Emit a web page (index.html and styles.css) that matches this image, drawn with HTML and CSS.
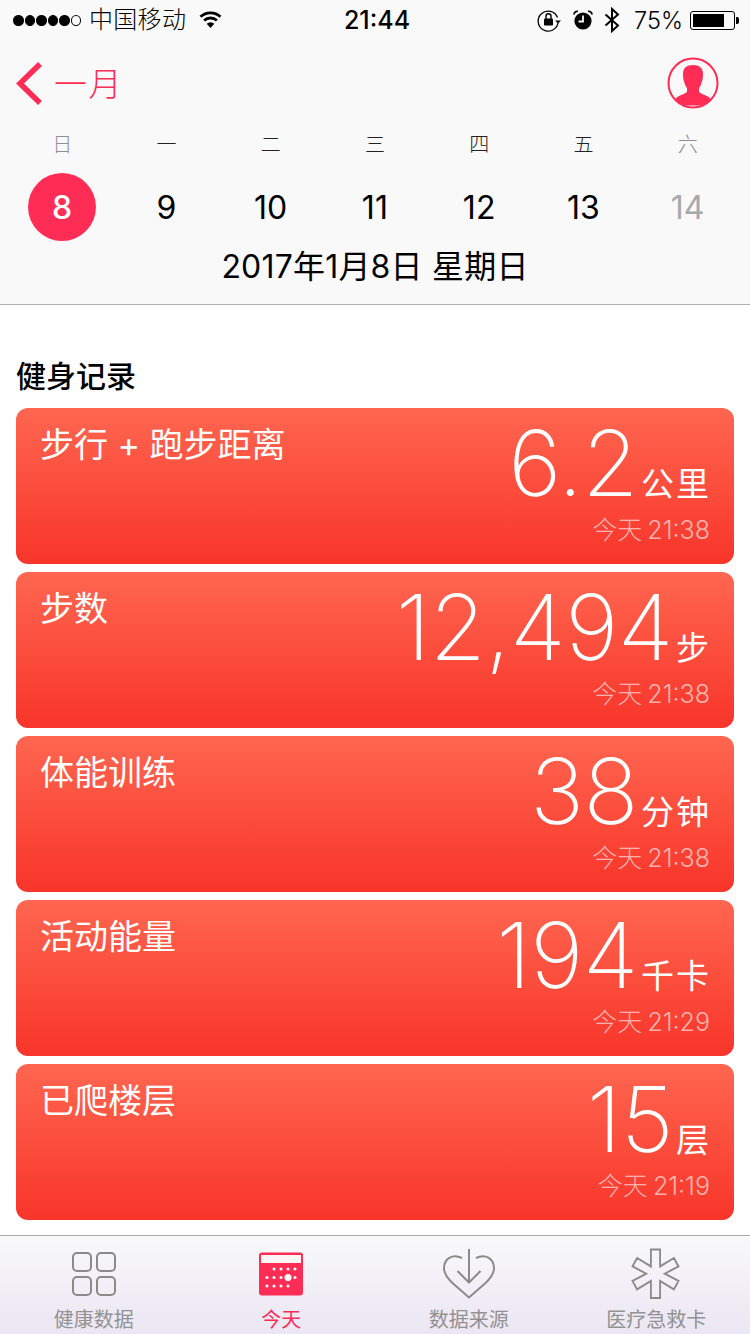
FILE: index.html
```html
<!DOCTYPE html>
<html lang="zh-CN">
<head>
<meta charset="utf-8">
<title>健康</title>
<link rel="stylesheet" href="styles.css">
</head>
<body>
<div class="app">
  <header class="top">
    <div class="status">
      <div class="status-left">
        <div class="signal"><i></i><i></i><i></i><i></i><i></i><i class="off"></i></div>
        <span class="carrier">中国移动</span>
        <svg class="wifi" width="25" height="18" viewBox="0 0 24 18"><path d="M12 17 8.200 12.800a5.400 5.400 0 0 1 7.600 0Z" fill="#000"/><path d="M5.600 9.600a9.200 9.200 0 0 1 12.800 0M2 5.800a14.500 14.500 0 0 1 20 0" fill="none" stroke="#000" stroke-width="2.800"/></svg>
      </div>
      <div class="clock">21:44</div>
      <div class="status-right">
        <svg class="lock" width="24" height="24" viewBox="0 0 24 24"><path d="M20.500 9.500A10 10 0 1 0 21 15" fill="none" stroke="#000" stroke-width="1.300"/><path d="M18 12.500h6l-3 3Z" fill="#000"/><rect x="7" y="10.500" width="9" height="7" rx="1" fill="#000"/><path d="M9 11V8.200a2.500 2.500 0 0 1 5 0V11" fill="none" stroke="#000" stroke-width="1.400"/></svg>
        <svg class="alarm" width="20" height="22" viewBox="0 0 20 22"><circle cx="10" cy="12" r="8.600" fill="#000"/><path d="M10 6.500V12.500H5.500" fill="none" stroke="#fafafa" stroke-width="1.800"/><path d="M.8 5.500A4 4 0 0 1 5 2.200M19.200 5.500A4 4 0 0 0 15 2.200" fill="none" stroke="#000" stroke-width="1.600"/></svg>
        <svg class="bt" width="16" height="26" viewBox="0 0 16 26"><path d="M1.500 7.500 14 18.500 8 24V2l6 5.500L1.500 18.500" fill="none" stroke="#000" stroke-width="2"/></svg>
        <span class="pct">75%</span>
        <div class="battery"><div class="battery-fill"></div></div><div class="battery-cap"></div>
      </div>
    </div>
    <div class="nav">
      <div class="back">
        <svg width="30" height="44" viewBox="0 0 30 44"><path d="M26 3 6 22.500 26 42" fill="none" stroke="#ff2d55" stroke-width="5.500"/></svg>
        <span class="month">一月</span>
      </div>
      <svg class="avatar" width="52" height="52" viewBox="0 0 52 52"><defs><clipPath id="c"><circle cx="26" cy="26" r="24"/></clipPath></defs><circle cx="26" cy="26" r="24.500" fill="none" stroke="#ff2d55" stroke-width="2"/><path clip-path="url(#c)" fill="#ff2d55" d="M26 8c6.500 0 10 3 10 9 0 3-.3 5.500-1 7.500-.6 2.500-1.700 5-3 6.500v3.500c1 2 6 3.500 9 5 2 1 3 3 4 9H7c1-6 2-8 4-9 3-1.500 8-3 9-5V31c-1.300-1.500-2.400-4-3-6.500-.7-2-1-4.500-1-7.500 0-6 3.500-9 10-9Z"/></svg>
    </div>
    <div class="weekdays">
      <span class="dim">日</span><span>一</span><span>二</span><span>三</span><span>四</span><span>五</span><span class="dim">六</span>
    </div>
    <div class="dates">
      <span class="date"><b class="today">8</b></span><span class="date">9</span><span class="date">10</span><span class="date">11</span><span class="date">12</span><span class="date">13</span><span class="date muted">14</span>
    </div>
    <div class="full-date">2017年1月8日 星期日</div>
  </header>

  <main class="content">
    <h2 class="section">健身记录</h2>
    <section class="card">
      <div class="card-title">步行 + 跑步距离</div>
      <div class="card-side">
        <div class="reading"><span class="value">6.2</span><span class="unit">公里</span></div>
        <div class="when">今天 21:38</div>
      </div>
    </section>
    <section class="card">
      <div class="card-title">步数</div>
      <div class="card-side">
        <div class="reading"><span class="value">12,494</span><span class="unit">步</span></div>
        <div class="when">今天 21:38</div>
      </div>
    </section>
    <section class="card">
      <div class="card-title">体能训练</div>
      <div class="card-side">
        <div class="reading"><span class="value">38</span><span class="unit">分钟</span></div>
        <div class="when">今天 21:38</div>
      </div>
    </section>
    <section class="card">
      <div class="card-title">活动能量</div>
      <div class="card-side">
        <div class="reading"><span class="value">194</span><span class="unit">千卡</span></div>
        <div class="when">今天 21:29</div>
      </div>
    </section>
    <section class="card">
      <div class="card-title">已爬楼层</div>
      <div class="card-side">
        <div class="reading"><span class="value">15</span><span class="unit">层</span></div>
        <div class="when">今天 21:19</div>
      </div>
    </section>
  </main>

  <nav class="tabs">
    <div class="tab">
      <svg width="46" height="46" viewBox="0 0 46 46"><g fill="none" stroke="#8a8a8a" stroke-width="2"><rect x="2" y="2" width="18" height="18" rx="4"/><rect x="26" y="2" width="18" height="18" rx="4"/><rect x="2" y="26" width="18" height="18" rx="4"/><rect x="26" y="26" width="18" height="18" rx="4"/></g></svg>
      <span>健康数据</span>
    </div>
    <div class="tab active">
      <svg width="46" height="46" viewBox="0 0 46 46"><rect x="1" y="1.500" width="44" height="43" rx="3" fill="#ff2d55"/><rect x="3" y="4" width="40" height="8" fill="#fff" opacity=".95"/><g fill="#fff"><circle cx="16" cy="18" r="1.500"/><circle cx="23" cy="18" r="1.500"/><circle cx="30" cy="18" r="1.500"/><circle cx="37" cy="18" r="1.500"/><circle cx="9" cy="26.500" r="1.500"/><circle cx="16" cy="26.500" r="1.500"/><circle cx="23" cy="26.500" r="1.500"/><circle cx="30" cy="26.500" r="3.500"/><circle cx="37" cy="26.500" r="1.500"/><circle cx="9" cy="35" r="1.500"/><circle cx="16" cy="35" r="1.500"/><circle cx="23" cy="35" r="1.500"/><circle cx="30" cy="35" r="1.500"/></g></svg>
      <span>今天</span>
    </div>
    <div class="tab">
      <svg class="source" width="54" height="54" viewBox="0 0 54 54"><g fill="none" stroke="#8a8a8a" stroke-width="2"><path d="M20 10C10 5.500 2 11 2 20c0 6 3.500 10.500 9 15.500l16 14 16-14c5.500-5 9-9.500 9-15.500 0-9-8-14.500-18-10"/><path d="M27 1v33M15.500 23 27 34.500 38.500 23"/></g></svg>
      <span>数据来源</span>
    </div>
    <div class="tab">
      <svg class="star" width="50" height="52" viewBox="0 0 50 52"><path fill="none" stroke="#8a8a8a" stroke-width="2" d="M20 1h10v17.500l15-8.700 5 8.700L35 26l15 7.500-5 8.700-15-8.700V51H20V33.500L5 42.200 0 33.500 15 26 0 18.500l5-8.700 15 8.700Z" transform="translate(1.500 .5) scale(.92 .97)"/></svg>
      <span>医疗急救卡</span>
    </div>
  </nav>
</div>
</body>
</html>
```
FILE: styles.css
```css
* { box-sizing: border-box; margin: 0; padding: 0; }
html, body { width: 750px; height: 1334px; overflow: hidden; background: #fff; }
body { font-family: Inter, "Noto Sans CJK SC", sans-serif; color: #000; }
.app { width: 750px; height: 1334px; display: flex; flex-direction: column; }

.top { height: 305px; background: #f9f9f9; border-bottom: 1px solid #b2b2b2; flex: none; }
.status { height: 40px; display: grid; grid-template-columns: 1fr auto 1fr; align-items: center; padding: 0 11px 0 13px; }
.status-left { display: flex; align-items: center; }
.signal { display: flex; gap: 1px; width: 68px; }
.signal i { width: 11px; height: 11px; border-radius: 50%; background: #000; border: 1px solid #000; }
.signal i.off { background: transparent; }
.carrier { font-size: 24px; line-height: 40px; margin-left: 8px; letter-spacing: .3px; font-weight: 300; }
.wifi { margin-left: 12px; }
.clock { font-size: 25px; font-weight: 500; margin-left: 2px; }
.status-right { display: flex; align-items: center; justify-content: flex-end; }
.lock { margin-right: 12px; }
.alarm { margin-right: 11px; }
.bt { margin-right: 14px; }
.pct { font-size: 23.500px; font-weight: 300; margin-right: 7px; }
.battery { width: 45px; height: 19px; border: 1px solid #000; border-radius: 3px; padding: 2px; }
.battery-fill { width: 31px; height: 100%; background: #000; }
.battery-cap { width: 3px; height: 7px; background: #000; margin-left: 1px; border-radius: 0 2px 2px 0; }

.nav { height: 88px; display: flex; align-items: center; justify-content: space-between; padding: 0 31px 0 14px; }
.back { display: flex; align-items: center; color: #ff2d55; margin-top: -2px; }
.month { font-size: 33px; margin: -2px 0 0 10px; font-weight: 300; letter-spacing: 1.500px; }
.avatar { margin-top: -2px; }

.weekdays, .dates { display: grid; grid-template-columns: repeat(7, 104.250px); padding-left: 10px; justify-items: center; align-items: center; }
.weekdays { height: 30px; font-size: 20px; font-weight: 300; color: #222; }
.weekdays .dim { color: #8e8e93; }
.dates { height: 68px; margin-top: 15px; font-size: 32px; font-weight: 400; }
.date { display: block; }
.muted { color: #a8a8a8; }
.today { display: flex; width: 68px; height: 68px; border-radius: 50%; background: #ff2d55; color: #fff; align-items: center; justify-content: center; font-weight: 500; }
.full-date { text-align: center; font-size: 32px; line-height: 52px; font-weight: 400; letter-spacing: .2px; }

.content { flex: 1; padding: 49px 16px 0; display: flex; flex-direction: column; gap: 8px; min-height: 0; }
.section { font-size: 30px; font-weight: 500; line-height: 44px; margin-bottom: 2px; }
.card { height: 156px; flex: none; border-radius: 12px; background: linear-gradient(#ff6650, #f8352a); color: #fff; display: flex; justify-content: space-between; padding: 0 25px; }
.card-title { font-size: 34px; line-height: 44px; padding-top: 15px; margin-left: -1px; white-space: nowrap; }
.card-side { display: flex; flex-direction: column; align-items: flex-end; }
.reading { display: flex; align-items: baseline; height: 100px; }
.value { font-size: 91px; font-weight: 250; line-height: 111px; letter-spacing: -.5px; }
.unit { font-size: 33px; margin: 0 -2px 0 3px; letter-spacing: 2px; }
.when { font-size: 25px; font-weight: 300; color: rgba(255,255,255,.62); line-height: 40px; margin: 2px -1px 0 0; word-spacing: -2px; }

.tabs { height: 99px; flex: none; border-top: 1px solid #a9a9a9; background: linear-gradient(#f9f9fa, #ebe6f3); display: grid; grid-template-columns: repeat(4, 1fr); }
.tab { display: flex; flex-direction: column; align-items: center; height: 98px; font-size: 20px; font-weight: 400; color: #929292; position: relative; padding-top: 15px; }
.tab span { position: absolute; top: 69px; line-height: 30px; white-space: nowrap; }
.tab.active { color: #ff2d55; }
.source, .star { margin-top: -3px; }
```
